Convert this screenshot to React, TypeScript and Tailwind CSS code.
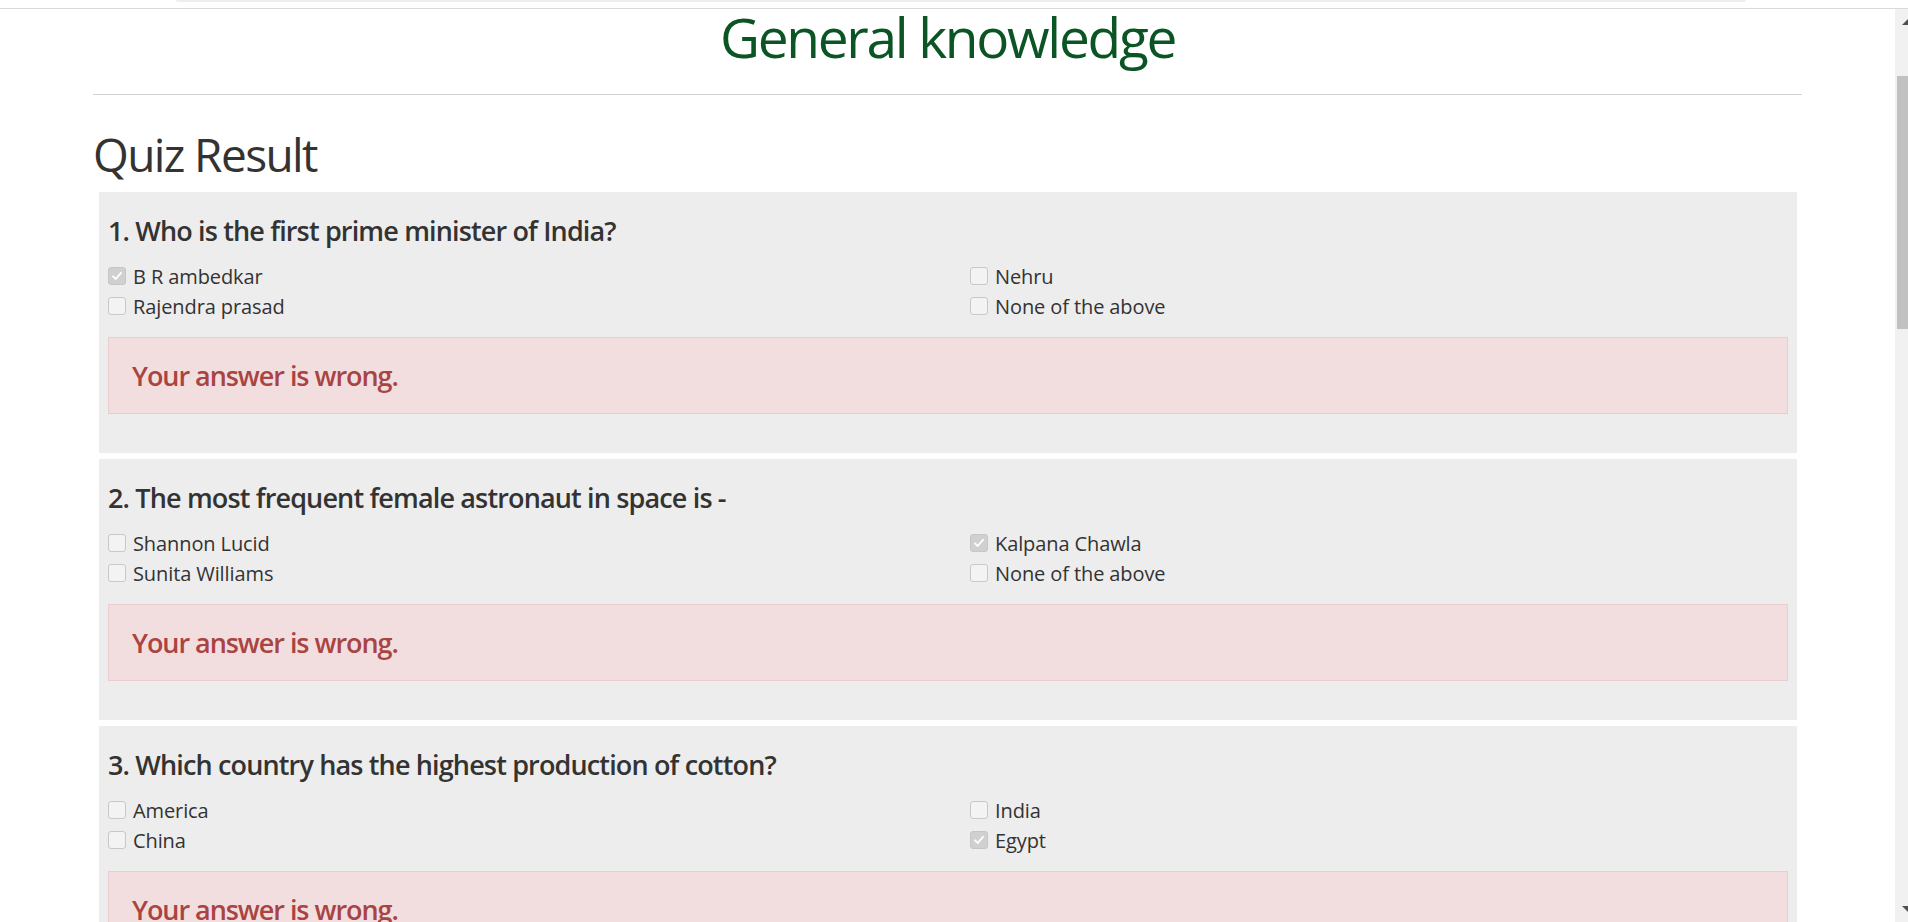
import React from "react";

type Opt = { label: string; checked?: boolean };
type Q = { n: number; text: string; options: Opt[] };

const questions: Q[] = [
  {
    n: 1,
    text: "Who is the first prime minister of India?",
    options: [
      { label: "B R ambedkar", checked: true },
      { label: "Nehru" },
      { label: "Rajendra prasad" },
      { label: "None of the above" },
    ],
  },
  {
    n: 2,
    text: "The most frequent female astronaut in space is -",
    options: [
      { label: "Shannon Lucid" },
      { label: "Kalpana Chawla", checked: true },
      { label: "Sunita Williams" },
      { label: "None of the above" },
    ],
  },
  {
    n: 3,
    text: "Which country has the highest production of cotton?",
    options: [
      { label: "America" },
      { label: "India" },
      { label: "China" },
      { label: "Egypt", checked: true },
    ],
  },
];

function Box({ checked }: { checked?: boolean }) {
  if (checked) {
    return (
      <span className="mt-[5px] flex h-[18px] w-[18px] shrink-0 items-center justify-center rounded-[3px] border border-[#c6c6c6] bg-[#d0d0d0]">
        <svg width="12" height="12" viewBox="0 0 12 12">
          <path d="M2 6.3 L4.8 9 L10 2.8" fill="none" stroke="#ffffff" strokeWidth="1.8" strokeLinecap="round" strokeLinejoin="round" />
        </svg>
      </span>
    );
  }
  return (
    <span className="mt-[5px] block h-[18px] w-[18px] shrink-0 rounded-[3px] border border-[#c8c8c8] bg-[#f3f3f3]" />
  );
}

function Card({ q }: { q: Q }) {
  return (
    <div className="bg-[#ededed] px-[9px] pt-[23px] pb-[39px]">
      <h4 className="text-[27px] leading-[32px] font-semibold tracking-[-0.85px] text-[#333333]">
        {q.n}. {q.text}
      </h4>
      <div className="mt-[15px] grid grid-cols-[862px_1fr]">
        {q.options.map((o) => (
          <label key={o.label} className="flex h-[30px] items-start gap-[7px] text-[20px] leading-[30px] tracking-[-0.1px] text-[#333333]">
            <Box checked={o.checked} />
            <span>{o.label}</span>
          </label>
        ))}
      </div>
      <div className="mt-[15px] border border-[#ebccd1] bg-[#f2dede] pt-[22px] pb-[21px] pl-[23px] text-[27px] leading-[32px] font-semibold tracking-[-1.05px] text-[#a94442]">
        Your answer is wrong.
      </div>
    </div>
  );
}

export default function App() {
  return (
    <div className="flex h-[922px] flex-col overflow-hidden bg-white font-['Open_Sans',sans-serif]">
      <div className="h-[9px] shrink-0 border-b border-[#dadada] bg-white pl-[176px]">
        <div className="h-[2px] w-[1570px] rounded-b-[4px] bg-[#eeeeee]" />
      </div>
      <div className="flex min-h-0 flex-1">
        <main className="min-w-0 flex-1 overflow-hidden px-[93px]">
          <div className="h-[85px] pt-[4px] text-center">
            <h1 className="text-[55px] leading-[48px] tracking-[-2.3px] text-[#0b5424]">General knowledge</h1>
          </div>
          <hr className="border-0 border-t border-[#d3d3d3]" />
          <h2 className="mt-[36px] text-[46px] leading-[46px] font-normal tracking-[-1.6px] text-[#333333]">Quiz Result</h2>
          <div className="mt-[15px] mr-[5px] ml-[6px] flex flex-col gap-[6px]">
            {questions.map((q) => (
              <Card key={q.n} q={q} />
            ))}
          </div>
        </main>
        <div className="relative w-[13px] shrink-0 bg-[#f1f1f1]">
          <svg className="absolute top-[10px] left-0" width="13" height="7" viewBox="0 0 13 7">
            <polygon points="7,6 13,0 19,6" fill="#505050" />
          </svg>
          <div className="absolute top-[67px] left-[2px] h-[253px] w-[11px] bg-[#c1c1c1]" />
          <svg className="absolute bottom-[9px] left-0" width="13" height="7" viewBox="0 0 13 7">
            <polygon points="7,0 19,0 13,6" fill="#505050" />
          </svg>
        </div>
      </div>
    </div>
  );
}
